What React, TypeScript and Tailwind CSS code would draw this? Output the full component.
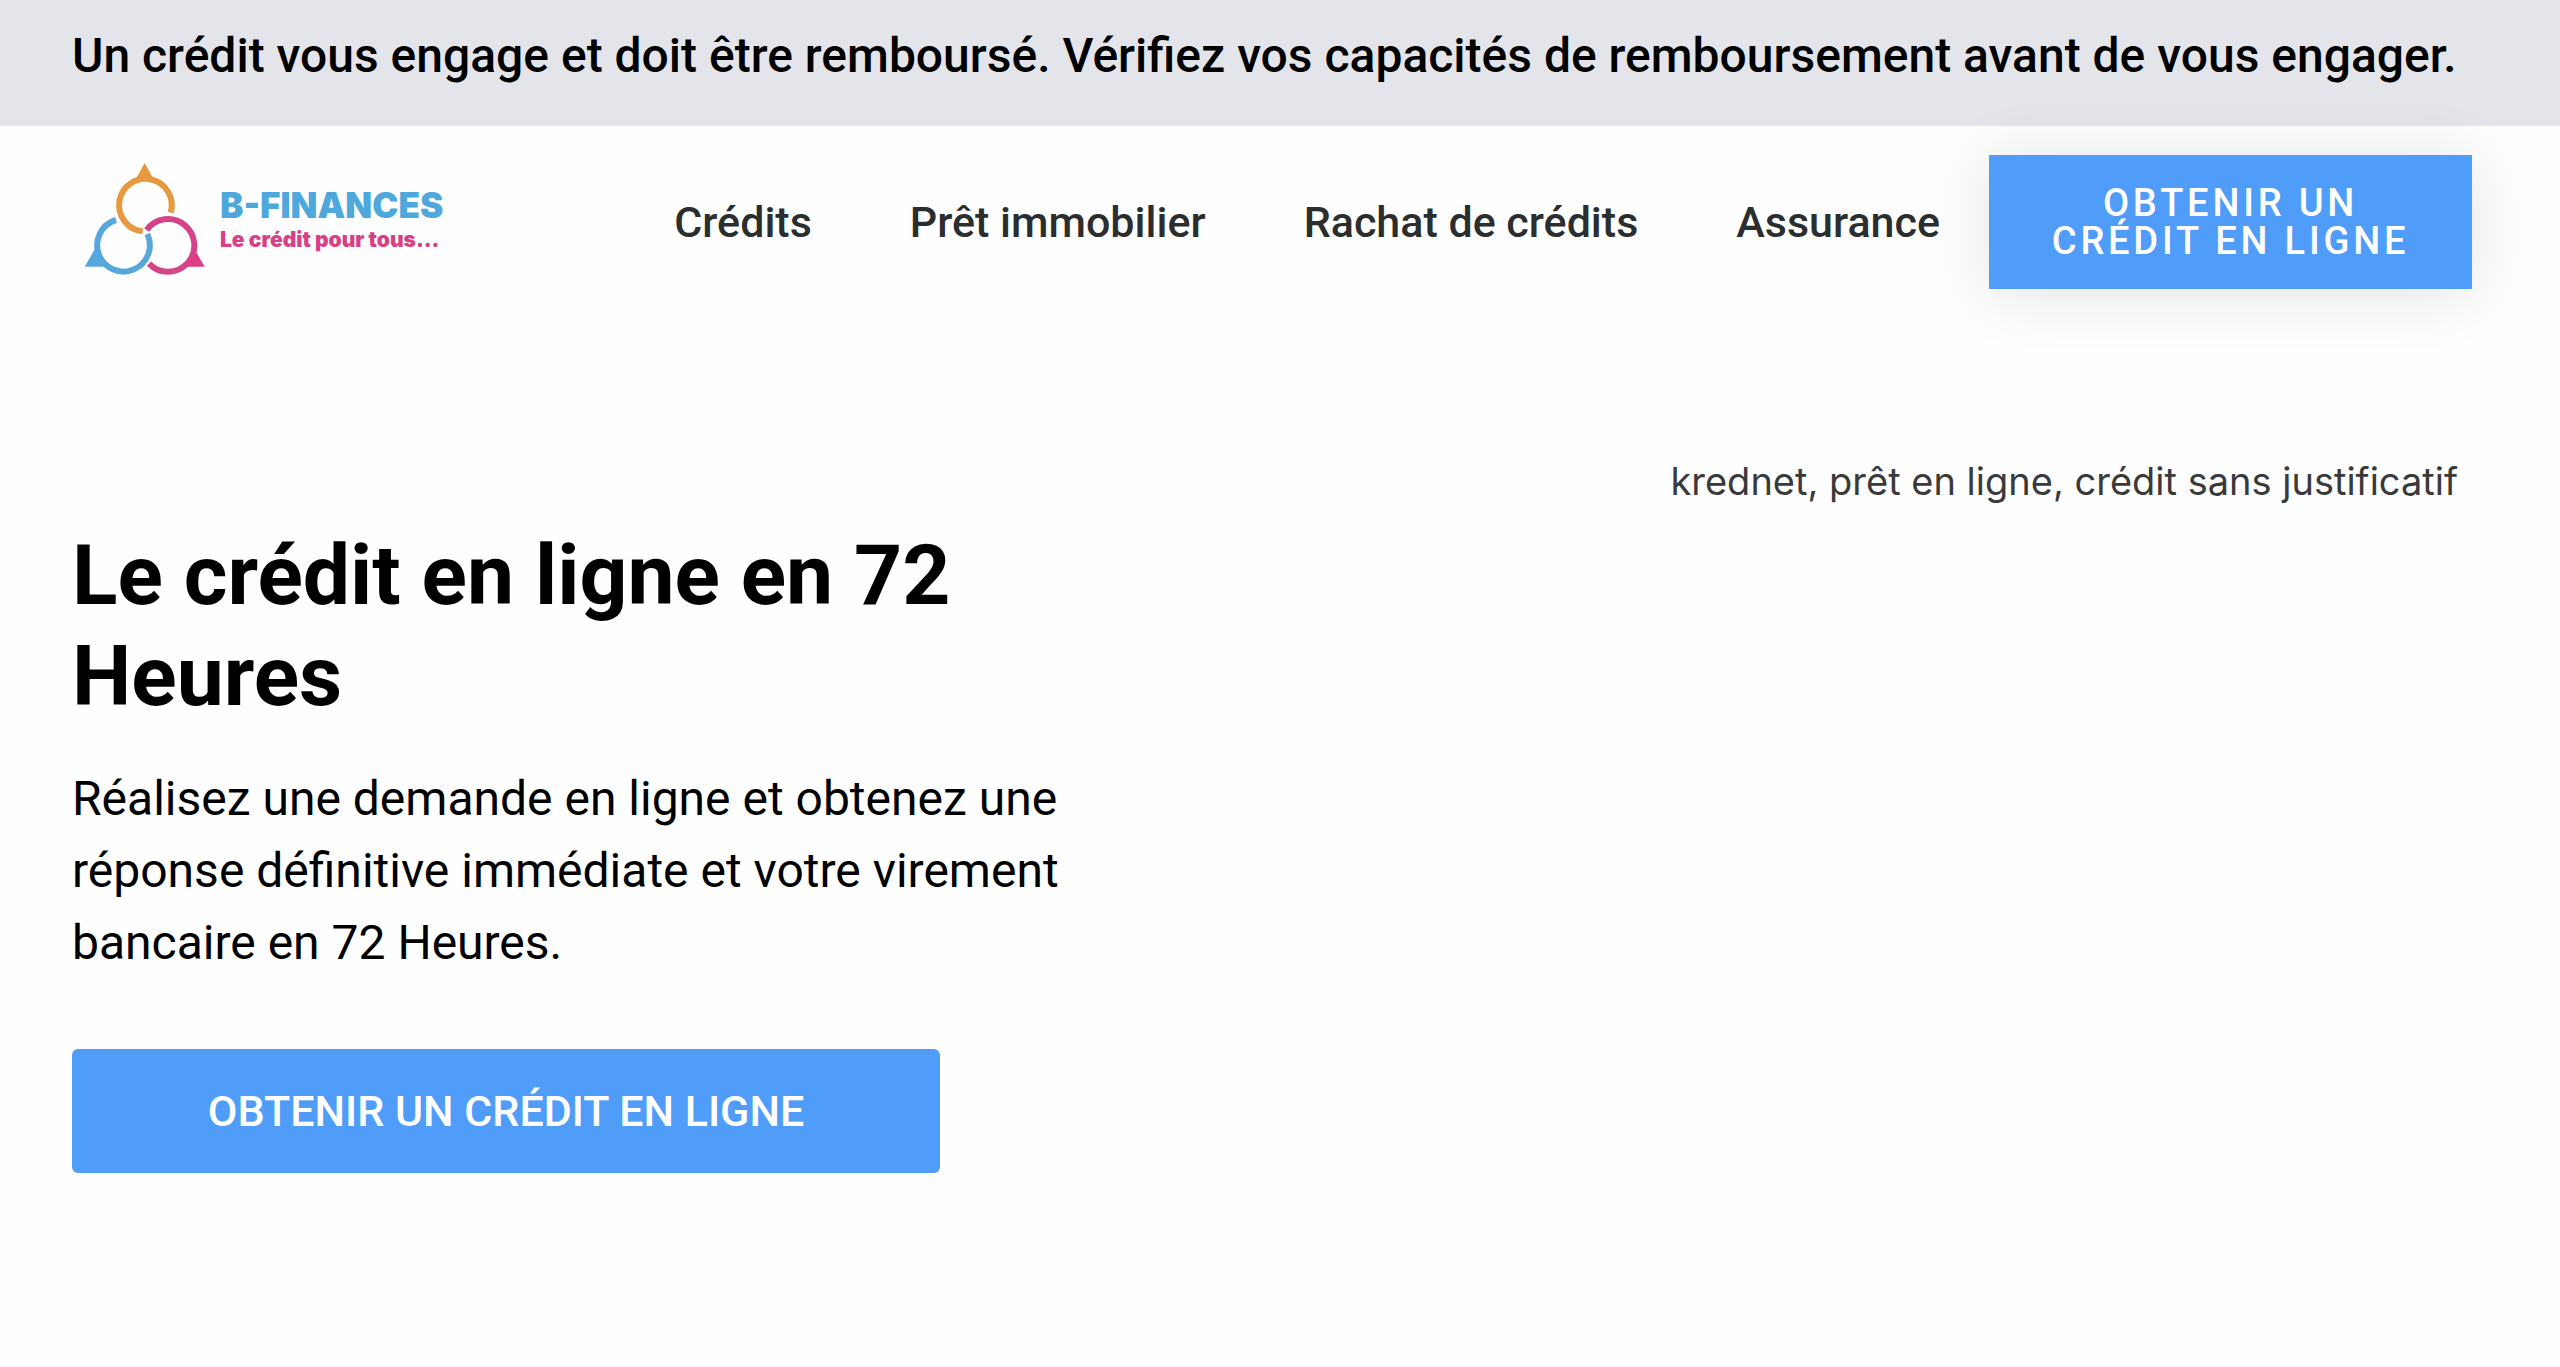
import React from "react";

interface NavItem {
  label: string;
  href: string;
}

const navItems: NavItem[] = [
  { label: "Crédits", href: "#credits" },
  { label: "Prêt immobilier", href: "#pret-immobilier" },
  { label: "Rachat de crédits", href: "#rachat" },
  { label: "Assurance", href: "#assurance" },
];

// Three interlocking rings, each with a pointed tip
function LogoMark() {
  return (
    <svg
      viewBox="72 60 366 348"
      className="h-[116px] w-[122px] shrink-0"
      fill="none"
      strokeWidth="18"
      aria-hidden="true"
    >
      <path d="M332 215A79 79 0 1 0 248 271" stroke="#e6993e" />
      <path d="M254 66L280 113Q254 126 228 113Z" fill="#e6993e" />
      <path d="M168 237A79 79 0 1 0 262 279" stroke="#56a8dc" />
      <path d="M74 377L106 322Q112 356 136 377Z" fill="#56a8dc" />
      <path d="M260 267A79 79 0 1 1 267 368" stroke="#d54388" />
      <path d="M434 377L402 322Q398 356 372 377Z" fill="#dc3f86" />
    </svg>
  );
}

function Banner() {
  return (
    <div className="bg-[#e3e5ea] px-[72px] pt-5 pb-[34px]">
      <p className="text-[48px] leading-[72px] font-medium text-black">
        Un crédit vous engage et doit être remboursé. Vérifiez vos capacités de
        remboursement avant de vous engager.
      </p>
    </div>
  );
}

function Header() {
  return (
    <header className="flex items-start justify-between pt-[29px] pr-[88px] pl-[84px]">
      <a href="#" className="flex items-center gap-[14px] pt-1.5">
        <LogoMark />
        <span className="flex flex-col pt-1 font-['Inter'] font-black">
          <span className="text-[35px] leading-[38px] text-[#4fa8dc]">
            B-FINANCES
          </span>
          <span className="text-[21px] leading-[32px] text-[#d93f87]">
            Le crédit pour tous...
          </span>
        </span>
      </a>

      <div className="flex items-center">
        <nav className="flex">
          {navItems.map((item) => (
            <a
              key={item.href}
              href={item.href}
              className="px-[49px] text-[43px] leading-[64px] font-medium whitespace-nowrap text-[#2b2e2e]"
            >
              {item.label}
            </a>
          ))}
        </nav>
        <button className="h-[134px] w-[483px] bg-[#4f9df9] px-14 text-[38px] leading-[38px] font-medium tracking-widest text-white uppercase shadow-[0_4px_64px_rgba(0,0,0,0.11)]">
          Obtenir un crédit en ligne
        </button>
      </div>
    </header>
  );
}

function Hero() {
  return (
    <section className="grid grid-cols-2 px-[72px] pt-[164px]">
      <div className="pt-[72px] pr-24">
        <h1 className="text-[84px] leading-[101px] font-bold text-black">
          Le crédit en ligne en 72 Heures
        </h1>
        <p className="mt-9 text-[48px] leading-[72px] text-black">
          Réalisez une demande en ligne et obtenez une réponse définitive
          immédiate et votre virement bancaire en 72 Heures.
        </p>
        <button className="mt-[70px] h-[124px] w-[868px] rounded-md bg-[#4f9df9] text-[43px] leading-[48px] font-medium text-white uppercase">
          Obtenir un crédit en ligne
        </button>
      </div>
      <p className="pr-[30px] text-right font-['Inter'] text-[38px] leading-[56px] text-[#3a3a3a]">
        krednet, prêt en ligne, crédit sans justificatif
      </p>
    </section>
  );
}

export default function App() {
  return (
    <div className="min-h-screen bg-[#fefefe] font-['Roboto',sans-serif]">
      <Banner />
      <Header />
      <Hero />
    </div>
  );
}
